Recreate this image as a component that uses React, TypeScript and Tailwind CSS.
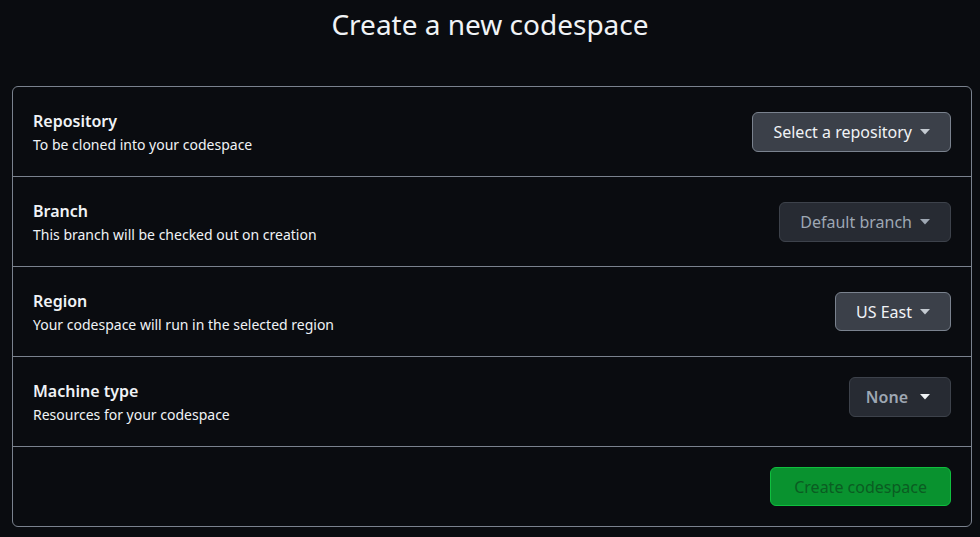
import { ReactNode } from "react";

const Caret = () => (
  <svg width="10" height="6" viewBox="0 0 10 6" className="shrink-0">
    <path d="M0 0h10L5 5.5z" fill="currentColor" />
  </svg>
);

type Row = {
  title: string;
  desc: string;
  action: ReactNode;
};

const rows: Row[] = [
  {
    title: "Repository",
    desc: "To be cloned into your codespace",
    action: (
      <button className="h-[40px] px-[20px] rounded-[6px] border border-[#7a828e] bg-[#3b4049] text-[#f0f3f6] text-[16px] flex items-center gap-[8px]">
        Select a repository
        <span className="text-[#c4cad1]"><Caret /></span>
      </button>
    ),
  },
  {
    title: "Branch",
    desc: "This branch will be checked out on creation",
    action: (
      <button className="h-[40px] px-[20px] rounded-[6px] border border-[#3d424b] bg-[#272b33] text-[#9ea7b3] text-[16px] flex items-center gap-[8px]">
        Default branch
        <Caret />
      </button>
    ),
  },
  {
    title: "Region",
    desc: "Your codespace will run in the selected region",
    action: (
      <button className="h-[39px] px-[20px] rounded-[6px] border border-[#7a828e] bg-[#3b4049] text-[#f0f3f6] text-[16px] flex items-center gap-[8px]">
        US East
        <span className="text-[#c4cad1]"><Caret /></span>
      </button>
    ),
  },
  {
    title: "Machine type",
    desc: "Resources for your codespace",
    action: (
      <button className="h-[40px] mb-[10px] pl-[16px] pr-[20px] rounded-[6px] border border-[#3d424b] bg-[#272b33] text-[#9ea7b3] text-[16px] font-semibold flex items-center gap-[12px]">
        None
        <span className="text-[#f0f3f6]"><Caret /></span>
      </button>
    ),
  },
];

export default function App() {
  return (
    <div
      className="min-h-[537px] w-full bg-[#0a0c10] text-[#f0f3f6]"
      style={{ fontFamily: '"Noto Sans", "Open Sans", sans-serif' }}
    >
      <h1 className="h-[86px] pt-[3px] text-center text-[28px] font-normal leading-[42px] text-[#f0f3f6]">
        Create a new codespace
      </h1>

      <div className="ml-[12px] mr-[8px] rounded-[6px] border border-[#7a828e] overflow-hidden">
        {rows.map((r) => (
          <div
            key={r.title}
            className="h-[90px] flex items-center justify-between pl-[20px] pr-[20px] border-b border-[#7a828e] last:h-[89px]"
          >
            <div className="flex flex-col">
              <span className="text-[16px] font-semibold leading-[24px]">{r.title}</span>
              <span className="mt-[2px] text-[14px] leading-[20px]">{r.desc}</span>
            </div>
            {r.action}
          </div>
        ))}
        <div className="h-[79px] flex items-center justify-end pr-[20px]">
          <button className="h-[39px] px-[23px] rounded-[6px] border border-[#0fbf3e] bg-[#09922f] text-[#0b5c22] text-[16px]">
            Create codespace
          </button>
        </div>
      </div>
    </div>
  );
}
